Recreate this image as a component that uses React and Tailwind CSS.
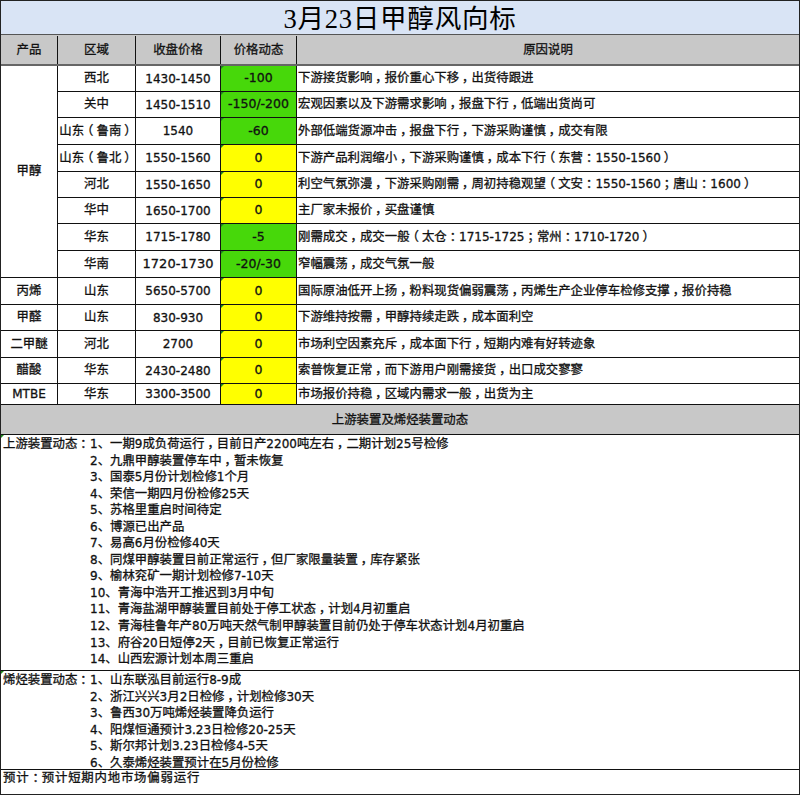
const rows = [
  ["西北", "1430-1450", "-100", "g", "下游接货影响，报价重心下移，出货待跟进"],
  ["关中", "1450-1510", "-150/-200", "g", "宏观因素以及下游需求影响，报盘下行，低端出货尚可"],
  ["山东（鲁南）", "1540", "-60", "g", "外部低端货源冲击，报盘下行，下游采购谨慎，成交有限"],
  ["山东（鲁北）", "1550-1560", "0", "y", "下游产品利润缩小，下游采购谨慎，成本下行（东营：1550-1560）"],
  ["河北", "1550-1650", "0", "y", "利空气氛弥漫，下游采购刚需，周初持稳观望（文安：1550-1560；唐山：1600）"],
  ["华中", "1650-1700", "0", "y", "主厂家未报价，买盘谨慎"],
  ["华东", "1715-1780", "-5", "g", "刚需成交，成交一般（太仓：1715-1725；常州：1710-1720）"],
  ["华南", "1720-1730", "-20/-30", "g", "窄幅震荡，成交气氛一般"],
];
const others = [
  ["丙烯", "山东", "5650-5700", "国际原油低开上扬，粉料现货偏弱震荡，丙烯生产企业停车检修支撑，报价持稳"],
  ["甲醛", "山东", "830-930", "下游维持按需，甲醇持续走跌，成本面利空"],
  ["二甲醚", "河北", "2700", "市场利空因素充斥，成本面下行，短期内难有好转迹象"],
  ["醋酸", "华东", "2430-2480", "索普恢复正常，而下游用户刚需接货，出口成交寥寥"],
  ["MTBE", "华东", "3300-3500", "市场报价持稳，区域内需求一般，出货为主"],
];
const up = ["1、一期9成负荷运行，目前日产2200吨左右，二期计划25号检修","2、九鼎甲醇装置停车中，暂未恢复","3、国泰5月份计划检修1个月","4、荣信一期四月份检修25天","5、苏格里重启时间待定","6、博源已出产品","7、易高6月份检修40天","8、同煤甲醇装置目前正常运行，但厂家限量装置，库存紧张","9、榆林兖矿一期计划检修7-10天","10、青海中浩开工推迟到3月中旬","11、青海盐湖甲醇装置目前处于停工状态，计划4月初重启","12、青海桂鲁年产80万吨天然气制甲醇装置目前仍处于停车状态计划4月初重启","13、府谷20日短停2天，目前已恢复正常运行","14、山西宏源计划本周三重启"];
const ole = ["1、山东联泓目前运行8-9成","2、浙江兴兴3月2日检修，计划检修30天","3、鲁西30万吨烯烃装置降负运行","4、阳煤恒通预计3.23日检修20-25天","5、斯尔邦计划3.23日检修4-5天","6、久泰烯烃装置预计在5月份检修"];

// Mixed text: Latin runs are a touch smaller than the CJK, and full-width punctuation sits centred in its cell.
const T = ({ t }) => (
  <>
    {t.split(/([\x20-\x7e]+|[，：；）]|[^，：；）（]（)/).filter(Boolean).map((p, i) => {
      if (/^[\x20-\x7e]/.test(p)) return <span key={i} className="text-[12px]">{p}</span>;
      if (p.length === 2 && p[1] === "（") return (
        <span key={i}>
          <span className="tracking-[-3px]">{p[0]}</span>
          <span className="mr-[3px]">（</span>
        </span>
      );
      if (/^[，：；）]$/.test(p)) return <span key={i} className="ml-[3px] tracking-[-3px]">{p}</span>;
      return <span key={i}>{p}</span>;
    })}
  </>
);

const cell = "flex items-center justify-center border-r border-b border-[#111] whitespace-nowrap";
const Tick = () => <span className="absolute left-0 top-0 border-t-[3px] border-r-[3px] border-t-[#1f8a1f] border-r-transparent" />;
const Dyn = ({ v, c, h }) => (
  <div className={`${cell} relative w-[76px] ${h} ${c === "g" ? "bg-[#47d80a]" : "bg-[#ffff00]"} text-[12.5px]`}><Tick />{v}</div>
);
const Reason = ({ t, h }) => (
  <div className={`flex flex-1 items-center border-b border-[#111] pl-[1px] whitespace-nowrap ${h}`}><div><T t={t} /></div></div>
);

const hs = ["h-[26px]","h-[26px]","h-[27px]","h-[27px]","h-[26px]","h-[26px]","h-[27px]","h-[27px]"];
const ohs = ["h-[27px]","h-[26px]","h-[27px]","h-[26px]","h-[21px]"];

const Block = ({ label, items, cls }) => (
  <div className={`flex border-b border-[#111] ${cls}`}>
    <div className="relative w-[89px] pl-[2px] pt-[1px] leading-[16.55px] whitespace-nowrap"><Tick /><T t={label} /></div>
    <div className="flex flex-col pt-[1px] leading-[16.55px] whitespace-nowrap">
      {items.map((t) => <div key={t}><T t={t} /></div>)}
    </div>
  </div>
);

export default function App() {
  return (
    <div className="h-[795px] w-[800px] overflow-hidden border border-[#222] bg-white font-['DejaVu_Sans','Noto_Sans_CJK_SC',sans-serif] text-[12.4px] text-[#111] [-webkit-text-stroke:0.3px]">
      <div className="flex h-[34px] items-center justify-center border-b border-[#555] bg-[#d9e4f5] pt-[4px] font-['Liberation_Serif','Noto_Sans_CJK_SC',serif] text-[26.6px] font-normal tracking-[0.7px] text-black [-webkit-text-stroke:0px]">3月23日甲醇风向标</div>
      <div className="flex h-[31px] border-b-2 border-[#666] bg-[#c8c8c8] pt-[1px]">
        <div className={`${cell} !border-b-0 w-[57px]`}>产品</div>
        <div className={`${cell} !border-b-0 w-[78px]`}>区域</div>
        <div className={`${cell} !border-b-0 w-[85px]`}>收盘价格</div>
        <div className={`${cell} !border-b-0 w-[76px]`}>价格动态</div>
        <div className="flex flex-1 items-center justify-center">原因说明</div>
      </div>
      <div className="flex">
        <div className={`${cell} w-[57px]`}>甲醇</div>
        <div className="flex flex-1 flex-col">
          {rows.map((r, i) => (
            <div key={i} className="flex">
              <div className={`${cell} w-[78px] ${hs[i]}`}><div><T t={r[0]} /></div></div>
              <div className={`${cell} w-[85px] ${hs[i]} ${r[1] === "1720-1730" ? "text-[13px]" : "text-[12px]"}`}>{r[1]}</div>
              <Dyn v={r[2]} c={r[3]} h={hs[i]} />
              <Reason t={r[4]} h={hs[i]} />
            </div>
          ))}
        </div>
      </div>
      {others.map((r, i) => (
        <div key={i} className="flex">
          <div className={`${cell} w-[57px] ${ohs[i]}`}>{r[0] === "MTBE" ? <span className="text-[12px]">MTBE</span> : r[0]}</div>
          <div className={`${cell} w-[78px] ${ohs[i]}`}>{r[1]}</div>
          <div className={`${cell} w-[85px] ${ohs[i]} text-[12px]`}>{r[2]}</div>
          <Dyn v="0" c="y" h={ohs[i]} />
          <Reason t={r[3]} h={ohs[i]} />
        </div>
      ))}
      <div className="flex h-[30px] items-center justify-center border-b border-[#111] bg-[#c8c8c8] pt-[1px]">上游装置及烯烃装置动态</div>
      <Block label="上游装置动态：" items={up} cls="h-[236px]" />
      <Block label="烯烃装置动态：" items={ole} cls="h-[99px]" />
      <div className="pl-[2px] leading-[16.55px] tracking-[0.8px]"><T t="预计：预计短期内地市场偏弱运行" /></div>
    </div>
  );
}
